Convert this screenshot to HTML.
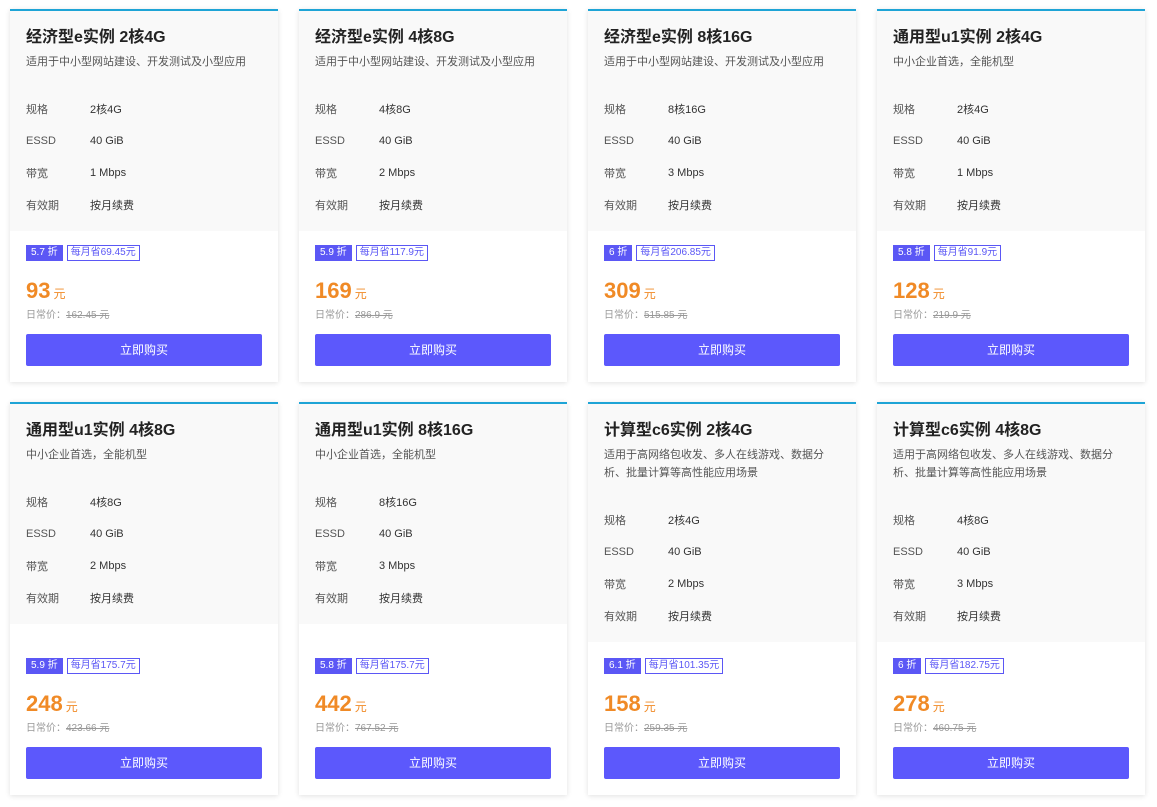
<!DOCTYPE html>
<html><head><meta charset="utf-8"><style>
*{margin:0;padding:0;box-sizing:border-box}
body{width:1157px;height:807px;background:#fff;font-family:"Liberation Sans","Noto Sans CJK SC",sans-serif;color:#333;position:relative;overflow:hidden}
.card{position:absolute;width:268px;border-top:2px solid #1ea4d6;background:#fff;box-shadow:0 1px 5px rgba(0,0,0,.12);display:flex;flex-direction:column}
.top{background:#f9f9f9;padding:16px 16px 10px}
.t{font-size:16px;font-weight:bold;line-height:22px;color:#222}
.s{font-size:11px;line-height:18px;color:#555;margin-top:4px}
.specs{margin-top:22px}
.r{display:flex;height:32px;align-items:center;font-size:11px;color:#555}
.r span:first-child{width:64px}
.r span:last-child{color:#333}
.bot{flex:1;display:flex;flex-direction:column;justify-content:flex-end;padding:11px 16px 16px}
.b{display:flex;height:16px;font-size:10px;line-height:14px}
.d{background:#5b57f5;color:#fff;padding:0 4px;border:1px solid #5b57f5}
.m{border:1px solid #5b57f5;color:#5b57f5;padding:0 3px;margin-left:4px}
.p{margin-top:15px;height:30px;line-height:30px;color:#f08a26;font-size:22px;font-weight:bold}
.p small{font-size:12px;font-weight:normal;margin-left:3px}
.o{font-size:10px;color:#999;line-height:16px;margin-top:2px}
.o s{color:#999}
.btn{margin-top:10px;height:32px;background:#5c58fc;color:#fff;font-size:12px;text-align:center;line-height:32px;border-radius:2px}
</style></head><body>

<div class="card" style="left:10px;top:9px;height:373px"><div class="top"><div class="t">经济型e实例 2核4G</div><div class="s">适用于中小型网站建设、开发测试及小型应用</div><div class="specs"><div class="r"><span>规格</span><span>2核4G</span></div><div class="r"><span>ESSD</span><span>40 GiB</span></div><div class="r"><span>带宽</span><span>1 Mbps</span></div><div class="r"><span>有效期</span><span>按月续费</span></div></div></div><div class="bot"><div class="b"><span class="d">5.7 折</span><span class="m">每月省69.45元</span></div><div class="p">93<small>元</small></div><div class="o">日常价：<s>162.45 元</s></div><div class="btn">立即购买</div></div></div>

<div class="card" style="left:299px;top:9px;height:373px"><div class="top"><div class="t">经济型e实例 4核8G</div><div class="s">适用于中小型网站建设、开发测试及小型应用</div><div class="specs"><div class="r"><span>规格</span><span>4核8G</span></div><div class="r"><span>ESSD</span><span>40 GiB</span></div><div class="r"><span>带宽</span><span>2 Mbps</span></div><div class="r"><span>有效期</span><span>按月续费</span></div></div></div><div class="bot"><div class="b"><span class="d">5.9 折</span><span class="m">每月省117.9元</span></div><div class="p">169<small>元</small></div><div class="o">日常价：<s>286.9 元</s></div><div class="btn">立即购买</div></div></div>

<div class="card" style="left:588px;top:9px;height:373px"><div class="top"><div class="t">经济型e实例 8核16G</div><div class="s">适用于中小型网站建设、开发测试及小型应用</div><div class="specs"><div class="r"><span>规格</span><span>8核16G</span></div><div class="r"><span>ESSD</span><span>40 GiB</span></div><div class="r"><span>带宽</span><span>3 Mbps</span></div><div class="r"><span>有效期</span><span>按月续费</span></div></div></div><div class="bot"><div class="b"><span class="d">6 折</span><span class="m">每月省206.85元</span></div><div class="p">309<small>元</small></div><div class="o">日常价：<s>515.85 元</s></div><div class="btn">立即购买</div></div></div>

<div class="card" style="left:877px;top:9px;height:373px"><div class="top"><div class="t">通用型u1实例 2核4G</div><div class="s">中小企业首选，全能机型</div><div class="specs"><div class="r"><span>规格</span><span>2核4G</span></div><div class="r"><span>ESSD</span><span>40 GiB</span></div><div class="r"><span>带宽</span><span>1 Mbps</span></div><div class="r"><span>有效期</span><span>按月续费</span></div></div></div><div class="bot"><div class="b"><span class="d">5.8 折</span><span class="m">每月省91.9元</span></div><div class="p">128<small>元</small></div><div class="o">日常价：<s>219.9 元</s></div><div class="btn">立即购买</div></div></div>

<div class="card" style="left:10px;top:402px;height:393px"><div class="top"><div class="t">通用型u1实例 4核8G</div><div class="s">中小企业首选，全能机型</div><div class="specs"><div class="r"><span>规格</span><span>4核8G</span></div><div class="r"><span>ESSD</span><span>40 GiB</span></div><div class="r"><span>带宽</span><span>2 Mbps</span></div><div class="r"><span>有效期</span><span>按月续费</span></div></div></div><div class="bot"><div class="b"><span class="d">5.9 折</span><span class="m">每月省175.7元</span></div><div class="p">248<small>元</small></div><div class="o">日常价：<s>423.66 元</s></div><div class="btn">立即购买</div></div></div>

<div class="card" style="left:299px;top:402px;height:393px"><div class="top"><div class="t">通用型u1实例 8核16G</div><div class="s">中小企业首选，全能机型</div><div class="specs"><div class="r"><span>规格</span><span>8核16G</span></div><div class="r"><span>ESSD</span><span>40 GiB</span></div><div class="r"><span>带宽</span><span>3 Mbps</span></div><div class="r"><span>有效期</span><span>按月续费</span></div></div></div><div class="bot"><div class="b"><span class="d">5.8 折</span><span class="m">每月省175.7元</span></div><div class="p">442<small>元</small></div><div class="o">日常价：<s>767.52 元</s></div><div class="btn">立即购买</div></div></div>

<div class="card" style="left:588px;top:402px;height:393px"><div class="top"><div class="t">计算型c6实例 2核4G</div><div class="s">适用于高网络包收发、多人在线游戏、数据分析、批量计算等高性能应用场景</div><div class="specs"><div class="r"><span>规格</span><span>2核4G</span></div><div class="r"><span>ESSD</span><span>40 GiB</span></div><div class="r"><span>带宽</span><span>2 Mbps</span></div><div class="r"><span>有效期</span><span>按月续费</span></div></div></div><div class="bot"><div class="b"><span class="d">6.1 折</span><span class="m">每月省101.35元</span></div><div class="p">158<small>元</small></div><div class="o">日常价：<s>259.35 元</s></div><div class="btn">立即购买</div></div></div>

<div class="card" style="left:877px;top:402px;height:393px"><div class="top"><div class="t">计算型c6实例 4核8G</div><div class="s">适用于高网络包收发、多人在线游戏、数据分析、批量计算等高性能应用场景</div><div class="specs"><div class="r"><span>规格</span><span>4核8G</span></div><div class="r"><span>ESSD</span><span>40 GiB</span></div><div class="r"><span>带宽</span><span>3 Mbps</span></div><div class="r"><span>有效期</span><span>按月续费</span></div></div></div><div class="bot"><div class="b"><span class="d">6 折</span><span class="m">每月省182.75元</span></div><div class="p">278<small>元</small></div><div class="o">日常价：<s>460.75 元</s></div><div class="btn">立即购买</div></div></div>

</body></html>
